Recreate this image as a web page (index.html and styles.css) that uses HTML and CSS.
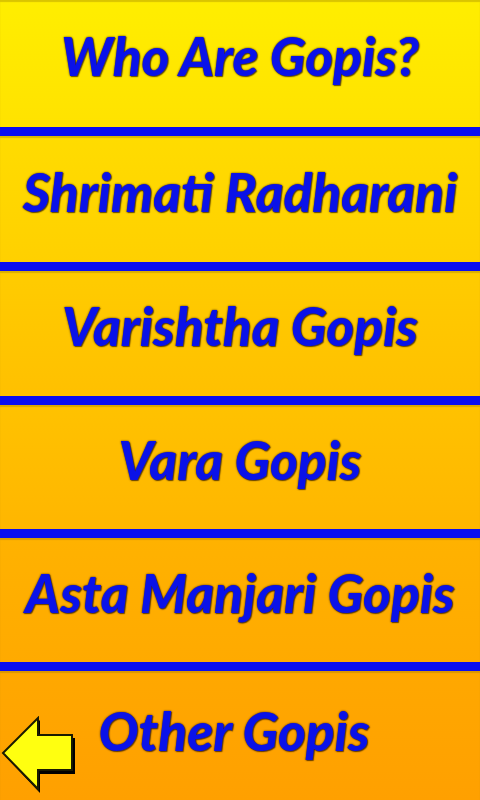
FILE: index.html
```html
<!DOCTYPE html>
<html lang="en">
<head>
    <meta charset="UTF-8">
    <meta name="viewport" content="width=device-width, initial-scale=1.0">
    <title>Gopis</title>
    <link rel="stylesheet" href="styles.css">
</head>
<body>
    <div class="menu">
        <a class="item item-1" href="#">Who Are Gopis?</a>
        <a class="item item-2" href="#">Shrimati Radharani</a>
        <a class="item item-3" href="#">Varishtha Gopis</a>
        <a class="item item-4" href="#">Vara Gopis</a>
        <a class="item item-5" href="#">Asta Manjari Gopis</a>
        <a class="item item-6" href="#">Other Gopis</a>
    </div>

    <a class="back" href="#" aria-label="Back">
        <svg width="76" height="78" viewBox="0 0 76 78">
            <!-- shadow -->
            <path d="M38 2 L3 38 L38 75 L38 56 L73 56 L73 20 L38 20 Z" fill="#000" transform="translate(1 2)"/>
            <path d="M37 2 L2 37 L37 73 L37 54 L71 54 L71 19 L37 19 Z" fill="#ffff10" stroke="#1a1a00" stroke-width="2" stroke-linejoin="miter"/>
        </svg>
    </a>
</body>
</html>
```

FILE: styles.css
```css
html, body {
    margin: 0;
    padding: 0;
    height: 100%;
}
body {
    font-family: Lato, "Open Sans", sans-serif;
    background-color: #ffa000;
    position: relative;
    overflow: hidden;
}
.menu {
    display: flex;
    flex-direction: column;
    height: 800px;
}
.item {
    box-sizing: border-box;
    flex: none;
    height: 134px;
    display: flex;
    align-items: center;
    justify-content: center;
    padding-bottom: 16px;
    color: #0a12e8;
    font-size: 53px;
    font-weight: 900;
    font-style: italic;
    text-decoration: none;
    white-space: nowrap;
    text-shadow: 0 0 2px rgba(40, 20, 0, 0.9), 1px 1px 1px rgba(40, 20, 0, 0.6);
    border-bottom: 9px solid #0a0ef0;
    box-shadow: inset 0 2px 1px rgba(150, 120, 0, 0.35);
}
.item-1 { height: 136px; background: linear-gradient(#ffee00, #ffe200); }
.item-2 { height: 135px; background: linear-gradient(#ffdc00, #ffd000); }
.item-3 { background: linear-gradient(#ffcc00, #ffc000); }
.item-4 { height: 133px; background: linear-gradient(#ffc200, #ffb600); }
.item-5 { height: 133px; background: linear-gradient(#ffb200, #ffaa00); }
.item-6 {
    flex: 1;
    height: auto;
    border-bottom: none;
    padding-bottom: 10px;
    padding-right: 12px;
    background: linear-gradient(#ffa800, #ffa000);
}
.back {
    position: absolute;
    left: 1px;
    top: 716px;
    display: block;
    line-height: 0;
}
```
